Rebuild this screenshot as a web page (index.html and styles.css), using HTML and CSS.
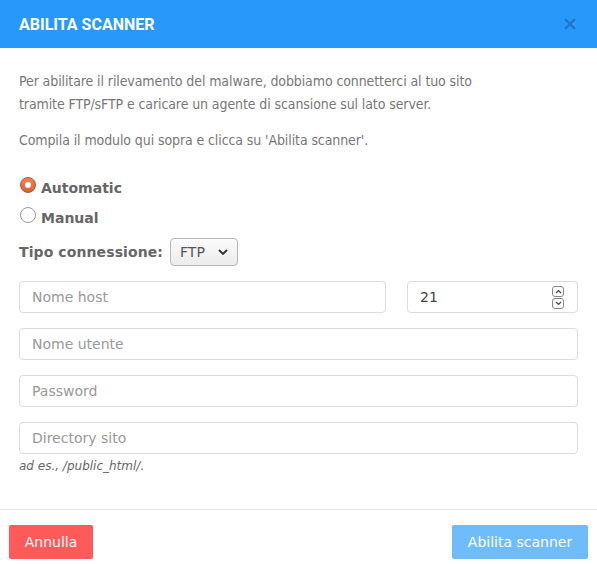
FILE: index.html
```html
<!DOCTYPE html>
<html lang="it">
<head>
  <meta charset="UTF-8" />
  <title>Abilita scanner</title>
  <meta name="viewport" content="width=device-width, initial-scale=1.0"/>
  <link rel="stylesheet" href="styles.css">
</head>
<body>

  <div class="modal">
    <!-- Header -->
    <div class="modal-header">
      <h2>ABILITA SCANNER</h2>
      <svg class="close" width="14" height="14" viewBox="0 0 14 14"><path d="M2 2l10 10M12 2L2 12" stroke="#1f72c4" stroke-width="2"/></svg>
    </div>

    <!-- Body -->
    <div class="modal-body">
      <p>Per abilitare il rilevamento del malware, dobbiamo connetterci al tuo sito tramite FTP/sFTP e caricare un agente di scansione sul lato server.</p>
      <p>Compila il modulo qui sopra e clicca su 'Abilita scanner'.</p>

      <label class="radio-row first">
        <span class="radio checked"></span>
        <span>Automatic</span>
      </label>
      <label class="radio-row">
        <span class="radio"></span>
        <span>Manual</span>
      </label>

      <div class="conn-row">
        <span class="conn-label">Tipo connessione:</span>
        <span class="select">FTP
          <svg width="10" height="6" viewBox="0 0 10 6"><path d="M1 1l4 4 4-4" fill="none" stroke="#333" stroke-width="1.8"/></svg>
        </span>
      </div>

      <div class="host-row">
        <div class="field host"><span class="ph">Nome host</span></div>
        <div class="field port">
          <span class="val">21</span>
          <span class="spin">
            <span class="spin-btn"><svg width="7" height="5" viewBox="0 0 7 5"><path d="M1 4l2.5-2.5L6 4" fill="none" stroke="#444" stroke-width="1.2"/></svg></span>
            <span class="spin-btn"><svg width="7" height="5" viewBox="0 0 7 5"><path d="M1 1l2.5 2.5L6 1" fill="none" stroke="#444" stroke-width="1.2"/></svg></span>
          </span>
        </div>
      </div>

      <div class="field"><span class="ph">Nome utente</span></div>
      <div class="field"><span class="ph">Password</span></div>
      <div class="field"><span class="ph">Directory sito</span></div>
      <div class="hint">ad es., /public_html/.</div>
    </div>

    <!-- Footer -->
    <div class="modal-footer">
      <button class="btn cancel">Annulla</button>
      <button class="btn enable">Abilita scanner</button>
    </div>
  </div>

</body>
</html>
```

FILE: styles.css
```css
* {
  box-sizing: border-box;
  margin: 0;
  padding: 0;
}

body {
  background: #fff;
  font-family: 'DejaVu Sans', sans-serif;
  color: #777;
  width: 597px;
  height: 564px;
  overflow: hidden;
}

.modal {
  display: flex;
  flex-direction: column;
  height: 564px;
}

.modal-header {
  height: 48px;
  flex-shrink: 0;
  background: #2899fb;
  display: flex;
  align-items: center;
  justify-content: space-between;
  padding: 0 20px 0 19px;
}

.modal-header h2 {
  font-family: Roboto, sans-serif;
  font-weight: 700;
  font-size: 16px;
  color: #fff;
}

.modal-body {
  padding: 22px 19px 0;
  flex: 1;
}

.modal-body p {
  font-family: 'DejaVu Sans Condensed', 'DejaVu Sans', sans-serif;
  font-size: 14px;
  letter-spacing: -0.1px;
  line-height: 23px;
  margin-bottom: 13px;
  max-width: 480px;
}

.radio-row {
  display: flex;
  align-items: center;
  gap: 5px;
  font-weight: 700;
  font-size: 14px;
  color: #666;
  height: 20px;
  margin-bottom: 10px;
}

.radio-row.first {
  margin-top: 26px;
  margin-bottom: 10px;
}

.radio {
  width: 16px;
  height: 16px;
  border-radius: 50%;
  border: 1px solid #999;
  background: #fff;
  margin-top: -6px;
  margin-left: 1px;
  position: relative;
}

.radio.checked {
  border-color: #c0502a;
  background: linear-gradient(#f0845a, #d9622e);
}

.radio.checked::after {
  content: '';
  position: absolute;
  left: 4px;
  top: 4px;
  width: 6px;
  height: 6px;
  border-radius: 50%;
  background: #fff;
}

.conn-row {
  display: flex;
  align-items: center;
  gap: 7px;
  margin-bottom: 15px;
}

.conn-label {
  font-weight: 700;
  font-size: 14px;
  color: #666;
  letter-spacing: 0.1px;
}

.select {
  display: flex;
  align-items: center;
  gap: 13px;
  height: 28px;
  padding: 0 9px;
  border: 1px solid #b9b9b9;
  border-radius: 4px;
  background: linear-gradient(#fbfbfb, #ececec);
  color: #555;
  font-size: 14px;
}

.host-row {
  display: flex;
  gap: 21px;
}

.field {
  height: 32px;
  border: 1px solid #dcdcdc;
  border-radius: 4px;
  display: flex;
  align-items: center;
  padding: 0 12px;
  font-size: 14px;
  margin-bottom: 15px;
}

.host {
  width: 367px;
}

.port {
  flex: 1;
  justify-content: space-between;
  padding-right: 13px;
}

.ph {
  color: #999;
}

.val {
  color: #444;
}

.spin {
  display: flex;
  flex-direction: column;
  gap: 1px;
}

.spin-btn {
  width: 12px;
  height: 11px;
  border: 1px solid #888;
  border-radius: 3px;
  display: flex;
  align-items: center;
  justify-content: center;
}

.hint {
  font-size: 12px;
  font-style: italic;
  color: #666;
  margin-top: -10px;
}

.modal-footer {
  border-top: 1px solid #e5e5e5;
  height: 55px;
  flex-shrink: 0;
  padding: 15px 9px 6px;
  display: flex;
  justify-content: space-between;
  align-items: flex-start;
}

.btn {
  height: 34px;
  border: none;
  border-radius: 2px;
  color: #fff;
  font-family: 'DejaVu Sans', sans-serif;
  font-size: 14px;
  padding: 0 15px;
}

.cancel {
  background: #ff5a5a;
  width: 84px;
}

.enable {
  background: #6fbcfb;
  width: 136px;
}
```
